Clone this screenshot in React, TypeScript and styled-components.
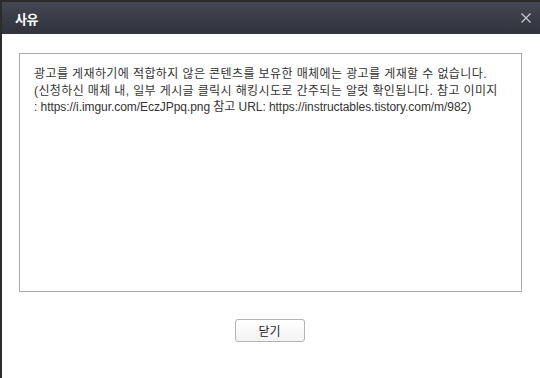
import React from "react";
import styled, { createGlobalStyle } from "styled-components";

const GlobalStyle = createGlobalStyle`
  html, body {
    margin: 0;
    padding: 0;
    background: #ffffff;
  }
  * { box-sizing: border-box; }
`;

const Dialog = styled.div`
  width: 540px;
  height: 378px;
  border-top: 2px solid #2b2b2d;
  border-left: 2px solid #2b2b2d;
  background: #ffffff;
  display: flex;
  flex-direction: column;
  font-family: "Liberation Sans", "Noto Sans CJK KR", sans-serif;
`;

const Header = styled.div`
  height: 32px;
  flex: none;
  display: flex;
  align-items: center;
  justify-content: space-between;
  padding: 0 9px 0 13px;
  background: linear-gradient(to bottom, #454853 0%, #3a3d47 45%, #31343d 100%);
`;

const Title = styled.span`
  color: #ffffff;
  font-family: "Noto Sans CJK KR", sans-serif;
  font-size: 13px;
  font-weight: 700;
  letter-spacing: -0.5px;
  line-height: 1;
`;

const CloseButton = styled.button`
  width: 10px;
  height: 10px;
  padding: 0;
  border: 0;
  background: transparent;
  display: flex;
  cursor: pointer;
  color: #c9cacd;
`;

const Body = styled.div`
  flex: 1;
  display: flex;
  flex-direction: column;
  padding: 19px 18px 0 17px;
`;

const ContentBox = styled.div`
  height: 239px;
  border: 1px solid #aaaaaa;
  padding: 12px 14px;
  color: #333333;
  font-size: 12px;
  line-height: 16.5px;
`;

const Line = styled.div<{ $spacing: number }>`
  white-space: nowrap;
  letter-spacing: ${(p) => p.$spacing}px;
`;

const Footer = styled.div`
  display: flex;
  justify-content: center;
  padding: 27px 2px 0 0;
`;

const Button = styled.button`
  width: 70px;
  height: 23px;
  border: 1px solid #b4b4b4;
  border-radius: 3px;
  background: linear-gradient(to bottom, #ffffff 0%, #f3f3f3 100%);
  color: #222222;
  font-family: "Noto Sans CJK KR", sans-serif;
  font-size: 12px;
  line-height: 1;
  padding: 0;
  cursor: pointer;
`;

export default function App() {
  return (
    <>
      <GlobalStyle />
      <Dialog>
        <Header>
          <Title>사유</Title>
          <CloseButton aria-label="닫기">
            <svg width="10" height="10" viewBox="0 0 10 10">
              <path d="M0.5 0.5 L9.5 9.5 M9.5 0.5 L0.5 9.5" stroke="currentColor" strokeWidth="1.2" fill="none" />
            </svg>
          </CloseButton>
        </Header>
        <Body>
          <ContentBox>
            <Line $spacing={0.4}>광고를 게재하기에 적합하지 않은 콘텐츠를 보유한 매체에는 광고를 게재할 수 없습니다.</Line>
            <Line $spacing={0.38}>(신청하신 매체 내, 일부 게시글 클릭시 해킹시도로 간주되는 알럿 확인됩니다. 참고 이미지</Line>
            <Line $spacing={-0.06}>: https://i.imgur.com/EczJPpq.png 참고 URL: https://instructables.tistory.com/m/982)</Line>
          </ContentBox>
          <Footer>
            <Button>닫기</Button>
          </Footer>
        </Body>
      </Dialog>
    </>
  );
}
